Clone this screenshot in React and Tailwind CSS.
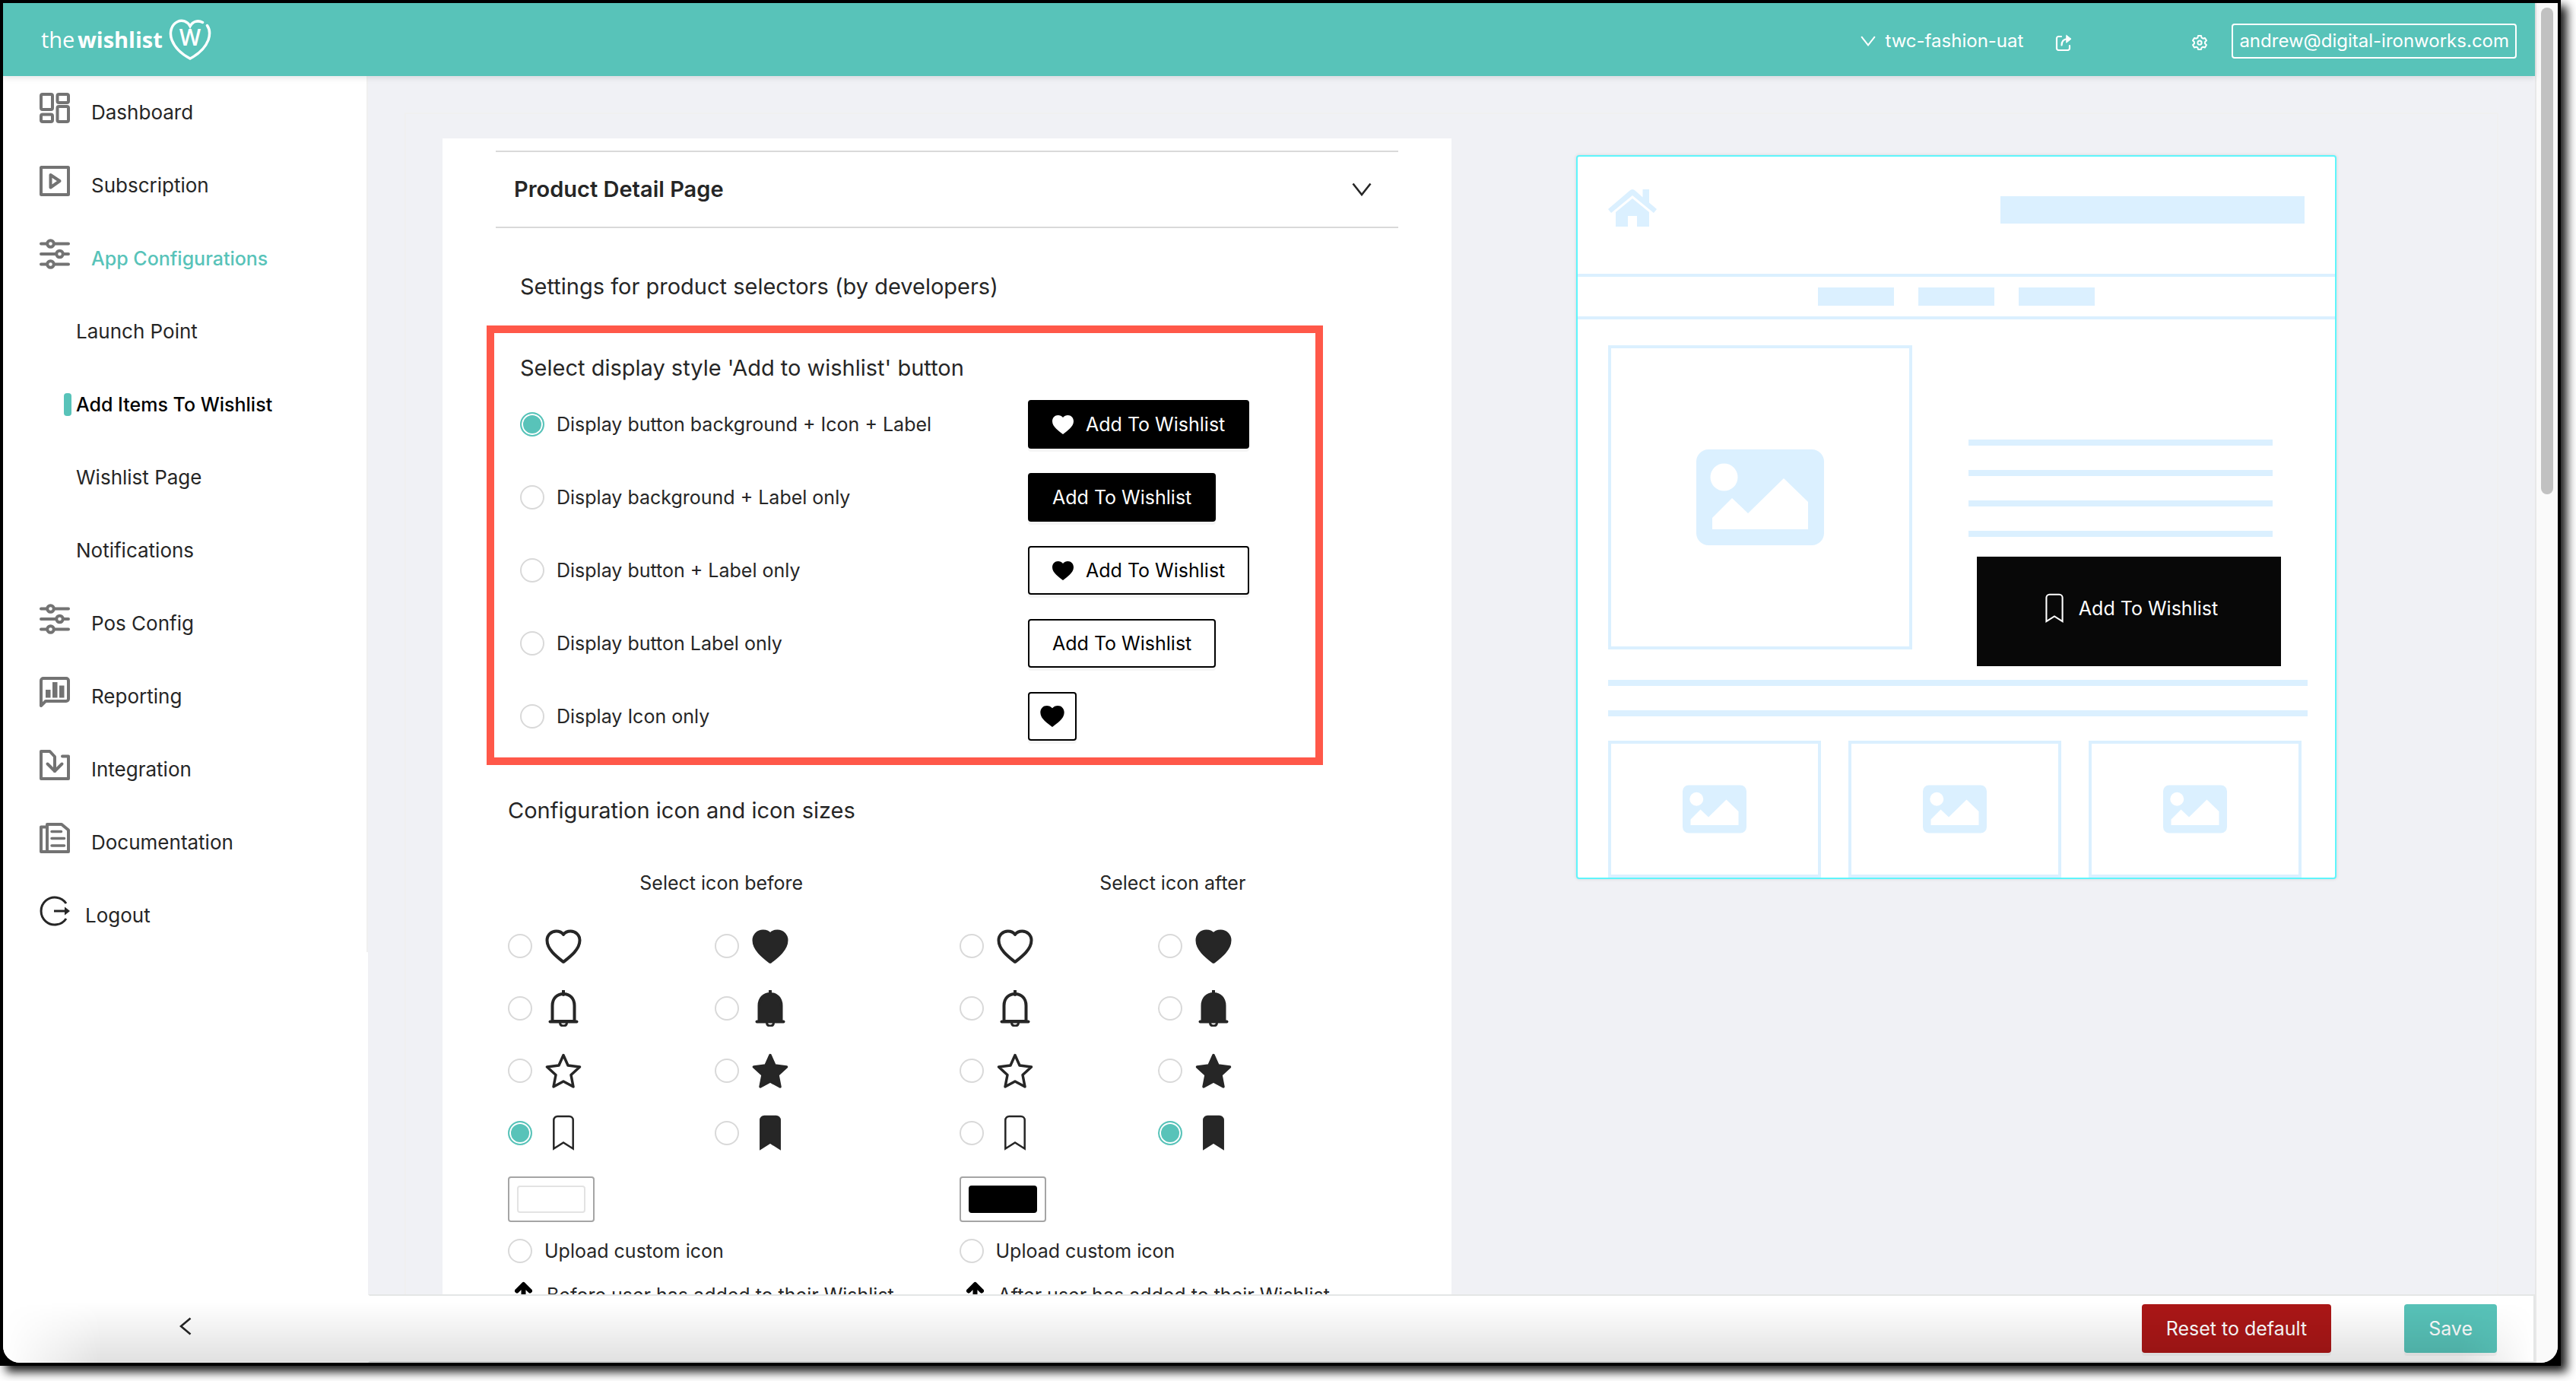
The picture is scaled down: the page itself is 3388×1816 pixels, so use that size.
import { useState } from "react";

/* ---------- icons ---------- */
function Svg({ className, viewBox = "0 0 40 40", children, ...rest }) {
  return (
    <svg className={className} viewBox={viewBox} fill="none" stroke="currentColor" strokeWidth="4" aria-hidden="true" {...rest}>
      {children}
    </svg>
  );
}

const DashboardIcon = () => (
  <Svg className="size-10">
    <rect x="2" y="2" width="15" height="20" rx="2" />
    <rect x="23.500" y="2" width="14.500" height="11" rx="2" />
    <rect x="2" y="28.500" width="15" height="9.500" rx="2" />
    <rect x="23.500" y="18" width="14.500" height="20" rx="2" />
  </Svg>
);
const SubscriptionIcon = () => (
  <Svg className="size-10">
    <rect x="2" y="2" width="36" height="36" rx="0.500" />
    <path d="M14.500 12v16.500L26.500 20z" strokeLinejoin="round" />
  </Svg>
);
const SlidersIcon = () => (
  <Svg className="size-10" strokeLinecap="round">
    <path d="M2 6.500h8M20 6.500h18M2 20h20M32 20h6M2 33.500h8M20 33.500h18" />
    <circle cx="14.500" cy="6.500" r="4.300" />
    <circle cx="26.500" cy="20" r="4.300" />
    <circle cx="14.500" cy="33.500" r="4.300" />
  </Svg>
);
const ReportingIcon = () => (
  <Svg className="size-10" strokeLinejoin="round">
    <path d="M2 38V5a3 3 0 0 1 3-3h30a3 3 0 0 1 3 3v24a3 3 0 0 1-3 3H8z" />
    <path d="M8 17h6.500v10.500H8zM17 7h6.500v20.500H17zM26 11.500h6.500v16H26z" fill="currentColor" stroke="none" />
  </Svg>
);
const IntegrationIcon = () => (
  <Svg className="size-10" strokeLinecap="round" strokeLinejoin="round">
    <path d="M30 8.500h8V38H2V2h11.500L20 9v19" />
    <path d="M10.500 18.500L20 28l9.500-9.500" />
  </Svg>
);
const DocumentationIcon = () => (
  <Svg className="size-10" strokeLinecap="round" strokeLinejoin="round">
    <path d="M10 2h19l9 7.500V38H10z" />
    <path d="M10 5.500H2V38h8" />
    <path d="M16 11.500h12.500M16 20.500h16.500M16 30h16.500" strokeWidth="3.500" />
  </Svg>
);
const LogoutIcon = () => (
  <Svg className="size-10 text-neutral-800" strokeWidth="3">
    <path d="M35 10A18 18 0 1 0 35 30" />
    <path d="M19 20h16" />
    <path d="M33 14.500L40 20l-7 5.500z" fill="currentColor" stroke="none" />
  </Svg>
);

const ChevronDown = ({ className }) => (
  <Svg className={className} viewBox="0 0 26 18" strokeWidth="2.600">
    <path d="M1.500 1.500L13 16 24.500 1.500" />
  </Svg>
);

const HEART_PATH = "M24 45C15 38 2.500 28.500 2.500 16.500 2.500 9 8.500 4.500 14.500 4.500c4 0 7.500 1.500 9.500 4.500 2-3 5.500-4.500 9.500-4.500 6 0 12 4.500 12 12C45.500 28.500 33 38 24 45z";

function Glyph({ kind, filled, className = "size-12" }) {
  const fill = filled ? "currentColor" : "none";
  if (kind === "heart")
    return (
      <Svg className={className} viewBox="0 0 48 48" strokeLinejoin="round" fill={fill}>
        <path d={HEART_PATH} />
      </Svg>
    );
  if (kind === "bell")
    return (
      <Svg className={className} viewBox="0 0 48 48">
        <path d="M9.500 41V20.500C9.500 11 15.500 5 24 5s14.500 6 14.500 15.500V41z" fill={fill} />
        <path d="M24 6V1" strokeLinecap="round" />
        <path d="M6.500 41.500h35" strokeLinecap="round" />
        <path d="M19.500 42.500c0 3.500 2 4.500 4.500 4.500s4.500-1 4.500-4.500" strokeWidth="3" />
      </Svg>
    );
  if (kind === "star")
    return (
      <Svg className={className} viewBox="0 0 48 48" strokeLinejoin="round" strokeWidth="3.500" fill={fill}>
        <path d="M24 3.500l6 13.500 15.500 2L34 29.500l3 15.500-13-7-13 7 3-15.500L2.500 19 18 17z" />
      </Svg>
    );
  return (
    <Svg className={className} viewBox="0 0 48 48" strokeWidth="2.500" fill={fill}>
      <path d="M11.300 44.500V7a5 5 0 0 1 5-5h15.400a5 5 0 0 1 5 5v37.500L24 36.500z" />
    </Svg>
  );
}

const SolidHeart = ({ className }) => (
  <svg className={className} viewBox="0 0 28 25" fill="currentColor" aria-hidden="true">
    <path d="M14 25C9 21 0 15.500 0 8 0 3 3.500 0 7.500 0 10 0 12.500 1 14 3c1.500-2 4-3 6.500-3C24.500 0 28 3 28 8c0 7.500-9 13-14 17z" />
  </svg>
);

const PictureIcon = ({ className }) => (
  <svg className={className} viewBox="0 0 168 126" fill="#dbf0ff" aria-hidden="true">
    <path
      fillRule="evenodd"
      d="M16 0h136a16 16 0 0 1 16 16v94a16 16 0 0 1-16 16H16a16 16 0 0 1-16-16V16A16 16 0 0 1 16 0zM36.500 18.500a18 18 0 1 0 0 36 18 18 0 1 0 0-36zM21 105h126V69L115 38 68 84 47 64 21 90z"
    />
  </svg>
);

const HomeIcon = () => (
  <svg className="h-[50px] w-16" viewBox="0 0 64 50" fill="#dbf0ff" aria-hidden="true">
    <path d="M0 26L28 2q4-4 8 0l9.500 8.500V0H54v17.500L64 26l-4 5L32 8 4 31z" />
    <path d="M10 30L32 12l22 18v19H38V35H26v14H10z" />
  </svg>
);

const Logo = () => (
  <a href="#home" aria-label="the wishlist" className="flex items-center text-white">
    <span className="font-['Open_Sans',sans-serif] text-[29px] leading-9">
      the <b className="-ml-1 font-bold">wishlist</b>
    </span>
    <svg className="ml-2 h-[54px] w-14" viewBox="0 0 56 54" fill="none" stroke="white" strokeWidth="3.500" strokeLinecap="round" aria-hidden="true">
      <path d="M44.500 4.500C38 1 31 3.500 28 9.500 24.500 3 17.500.500 11.500 3.500 3 7.500.500 18 4 27.500 8 38 17.500 46.500 28 52c10.500-5.500 20-14 24-24.500C54.500 20 54 13.500 50.500 8.500" />
      <text x="28" y="35" textAnchor="middle" fill="white" stroke="none" className="font-['Open_Sans',sans-serif] text-[30px] font-semibold">W</text>
    </svg>
  </a>
);

/* ---------- controls ---------- */
function Radio({ name, value, checked, onChange, label }) {
  return (
    <input
      type="radio"
      name={name}
      value={value}
      checked={checked}
      onChange={() => onChange(value)}
      aria-label={label}
      className="size-8 shrink-0 appearance-none rounded-full border-2 border-[#d9d9d9] bg-white checked:border-[#58c3b9] checked:bg-[#58c3b9] checked:shadow-[inset_0_0_0_2px_white]"
    />
  );
}

/* ---------- layout ---------- */
function Header() {
  return (
    <header className="z-10 flex h-24 shrink-0 items-center justify-between bg-[#58c3b9] pr-6 pl-[50px] text-white shadow-[0_2px_8px_rgba(0,21,41,0.12)]">
      <Logo />
      <div className="flex items-center pt-1 text-[24px] leading-8">
        <button type="button" className="flex items-center gap-3">
          <ChevronDown className="h-[14px] w-5" />
          twc-fashion-uat
        </button>
        <button type="button" aria-label="Open store" className="ml-[42px] pt-1">
          <Svg className="size-[22px]" viewBox="0 0 22 22" strokeWidth="2.200" strokeLinecap="round" strokeLinejoin="round">
            <path d="M8 3H4.500A2.500 2.500 0 0 0 2 5.500v13A2.500 2.500 0 0 0 4.500 21h12a2.500 2.500 0 0 0 2.500-2.500V15" />
            <path d="M8.500 14.500C8.500 9 11 6.500 16 6" />
            <path d="M15 1.500L21 6.200 15 11z" fill="currentColor" strokeWidth="1" />
          </Svg>
        </button>
        <button type="button" aria-label="Settings" className="ml-[158px] pt-1">
          <Svg className="size-5" viewBox="0 0 20 20" strokeWidth="2" strokeLinejoin="round">
            <path d="M8 1h4l.6 2.700 1.800 1 2.600-.8 2 3.400-2 1.900v2l2 1.900-2 3.400-2.600-.8-1.800 1L12 19H8l-.6-2.300-1.800-1-2.600.8-2-3.400 2-1.900v-2L1 7.300l2-3.400 2.600.8 1.800-1z" />
            <circle cx="10" cy="10.200" r="2.600" />
          </Svg>
        </button>
        <button type="button" className="ml-8 h-[46px] rounded border-2 border-white px-2">
          andrew@digital-ironworks.com
        </button>
      </div>
    </header>
  );
}

const NAV = [
  { label: "Dashboard", Icon: DashboardIcon },
  { label: "Subscription", Icon: SubscriptionIcon },
  { label: "App Configurations", Icon: SlidersIcon, open: true },
  { label: "Launch Point", sub: true },
  { label: "Add Items To Wishlist", sub: true, current: true },
  { label: "Wishlist Page", sub: true },
  { label: "Notifications", sub: true },
  { label: "Pos Config", Icon: SlidersIcon },
  { label: "Reporting", Icon: ReportingIcon },
  { label: "Integration", Icon: IntegrationIcon },
  { label: "Documentation", Icon: DocumentationIcon },
  { label: "Logout", Icon: LogoutIcon, tight: true },
];

function Sidebar() {
  return (
    <aside className="flex w-[480px] shrink-0 flex-col justify-between bg-white">
      <nav>
        <ul className="border-r-2 border-[#f0f0f0]">
          {NAV.map(({ label, Icon, sub, open, current, tight }) => (
            <li key={label} className="flex h-24 items-center">
              {sub ? (
                <a href={"#" + label} className={`flex items-center pl-20 leading-8 ${current ? "text-[25px] font-medium text-black" : "text-[26px] text-[#262626]"}`}>
                  <span className={`mr-1.5 h-[30px] w-2.5 rounded ${current ? "bg-[#58c3b9]" : ""}`} />
                  {label}
                </a>
              ) : (
                <a
                  href={"#" + label}
                  className={`flex items-center pl-12 leading-8 ${tight ? "gap-5" : "gap-7"} ${open ? "text-[25px] font-medium text-[#58c3b9]" : "text-[26px] text-[#262626]"}`}
                >
                  <span className="mb-3 text-[#737373]">
                    <Icon />
                  </span>
                  {label}
                </a>
              )}
            </li>
          ))}
        </ul>
      </nav>
      <button type="button" aria-label="Collapse menu" className="flex h-24 items-center justify-center text-[#262626]">
        <Svg className="h-6 w-4" viewBox="0 0 16 24" strokeWidth="2.600">
          <path d="M14.500 1.500L2 12l12.500 10.500" />
        </Svg>
      </button>
    </aside>
  );
}

const STYLES = [
  { id: "full", label: "Display button background + Icon + Label", solid: true, icon: true, text: true },
  { id: "bg-label", label: "Display background + Label only", solid: true, text: true },
  { id: "button-label", label: "Display button + Label only", icon: true, text: true },
  { id: "label", label: "Display button Label only", text: true },
  { id: "icon", label: "Display Icon only", icon: true },
];

function StylePicker() {
  const [style, setStyle] = useState("full");
  return (
    <div role="radiogroup" aria-labelledby="style-title" className="-mx-3 mt-[25px] mr-[99px] border-[10px] border-[#ff5849] pt-5 pb-1.5 pl-[34px]">
      <p id="style-title" className="text-[29px] leading-[52px]">
        Select display style &#39;Add to wishlist&#39; button
      </p>
      {STYLES.map((s) => (
        <div key={s.id} className="flex h-24 items-center">
          <label className="flex w-[668px] items-center gap-4 text-[25px] leading-8">
            <Radio name="display-style" value={s.id} checked={style === s.id} onChange={setStyle} label={s.label} />
            {s.label}
          </label>
          <button
            type="button"
            aria-label={s.text ? undefined : "Add to wishlist"}
            className={`flex h-16 items-center gap-4 rounded border-2 border-black text-[25px] leading-8 shadow-[0_4px_0_rgba(0,0,0,0.04)] ${
              s.solid ? "bg-black text-white" : "bg-white text-black"
            } ${s.text ? "px-[30px]" : "w-16 justify-center"}`}
          >
            {s.icon && <SolidHeart className={s.text ? "h-[25px] w-7" : "h-7 w-8"} />}
            {s.text && "Add To Wishlist"}
          </button>
        </div>
      ))}
    </div>
  );
}

const KINDS = ["heart", "bell", "star", "bookmark"];

function IconColumn({ title, name, initial, swatch, firstCol, hint }) {
  const [value, setValue] = useState(initial);
  return (
    <section className="pl-4">
      <h3 className="-ml-4 text-center text-[25px] leading-8">{title}</h3>
      <div className="mt-[26px]">
        {KINDS.map((kind) => (
          <div key={kind} className="flex h-[82px] items-center">
            {[false, true].map((filled) => {
              const id = kind + (filled ? "-filled" : "-outline");
              return (
                <label key={id} className={`flex items-center gap-[17px] text-[#262626] ${filled ? "" : firstCol}`}>
                  <Radio name={name} value={id} checked={value === id} onChange={setValue} label={id} />
                  <Glyph kind={kind} filled={filled} />
                </label>
              );
            })}
          </div>
        ))}
      </div>
      <button type="button" aria-label="Icon colour" className="mt-4 block rounded border-2 border-[#a5a5a5] p-2.5">
        <span className={`block h-9 w-[90px] rounded border-2 ${swatch}`} />
      </button>
      <label className="mt-[22px] flex items-center gap-4 text-[25px] leading-8">
        <Radio name={name} value="custom" checked={value === "custom"} onChange={setValue} label="Upload custom icon" />
        Upload custom icon
      </label>
      <p className="mt-6 flex items-center text-[25px] leading-9">
        <Svg className="mr-[19px] ml-[9px] h-9 w-[23px] text-black" viewBox="0 0 23 36" strokeWidth="6" strokeLinecap="round" strokeLinejoin="round">
          <path d="M3 12.500L11.500 4l8.500 8.500M11.500 5v26" />
        </Svg>
        {hint}
      </p>
    </section>
  );
}

function SettingsCard() {
  return (
    <div className="bg-white px-[70px] pt-4 text-[#262626]">
      <button type="button" className="flex h-[102px] w-full items-center justify-between border-y-2 border-[#d9d9d9] pr-[35px] pl-6">
        <h2 className="text-[29px] leading-10 font-semibold">Product Detail Page</h2>
        <ChevronDown className="h-[18px] w-[26px]" />
      </button>
      <h3 className="mt-[51px] ml-8 text-[29px] leading-[52px]">Settings for product selectors (by developers)</h3>
      <StylePicker />
      <h3 className="mt-[34px] ml-4 text-[29px] leading-[52px]">Configuration icon and icon sizes</h3>
      <div className="mt-[53px] grid grid-cols-2">
        <IconColumn title="Select icon before" name="icon-before" initial="bookmark-outline" swatch="border-[#e3e3e3] bg-white" firstCol="w-[272px]" hint="Before user has added to their Wishlist" />
        <IconColumn title="Select icon after" name="icon-after" initial="bookmark-filled" swatch="border-black bg-black" firstCol="w-[261px]" hint="After user has added to their Wishlist" />
      </div>
    </div>
  );
}

const Bar = ({ className }) => <div className={`bg-[#dbf0ff] ${className}`} />;

function Preview() {
  return (
    <div className="mx-auto mt-[22px] h-[952px] w-[1000px] overflow-hidden rounded border-2 border-[#5ff5fb] bg-white shadow-[0_0_4px_rgba(0,0,0,0.12)]">
      <div className="flex h-[154px] items-start justify-between px-10 pt-[43px]">
        <HomeIcon />
        <Bar className="mt-[9px] h-9 w-[400px]" />
      </div>
      <div className="flex h-[60px] items-center justify-center gap-8 border-y-4 border-[#dbf0ff]">
        <Bar className="h-6 w-[100px]" />
        <Bar className="h-6 w-[100px]" />
        <Bar className="h-6 w-[100px]" />
      </div>
      <div className="mt-[34px] ml-10 flex">
        <div className="flex size-[400px] items-center justify-center border-4 border-[#dbf0ff]">
          <PictureIcon className="h-[126px] w-[168px]" />
        </div>
        <div className="mt-[124px] -mb-6 ml-[74px]">
          <div className="flex flex-col gap-8">
            <Bar className="h-2 w-[400px]" />
            <Bar className="h-2 w-[400px]" />
            <Bar className="h-2 w-[400px]" />
            <Bar className="h-2 w-[400px]" />
          </div>
          <button type="button" className="mt-[26px] ml-[11px] flex h-36 w-[400px] items-center justify-center gap-3 bg-[#080808] pb-2 text-[25px] leading-8 text-white">
            <Glyph kind="bookmark" className="size-10" />
            Add To Wishlist
          </button>
        </div>
      </div>
      <Bar className="mt-10 ml-10 h-2 w-[920px]" />
      <Bar className="mt-8 ml-10 h-2 w-[920px]" />
      <div className="mt-8 ml-10 flex gap-9">
        {[0, 1, 2].map((i) => (
          <div key={i} className="flex h-[180px] w-[280px] items-center justify-center border-4 border-[#dbf0ff]">
            <PictureIcon className="h-16 w-[84px]" />
          </div>
        ))}
      </div>
    </div>
  );
}

function Footer() {
  return (
    <footer className="flex h-[90px] shrink-0 items-start justify-end gap-24 border-2 border-[#e4e6e6] border-l-transparent bg-white pt-[11px] pr-12 text-[25px] leading-8 text-white">
      <button type="button" className="h-16 rounded bg-[#ab1717] px-8 shadow-[0_4px_0_rgba(0,0,0,0.04)]">Reset to default</button>
      <button type="button" className="h-16 rounded bg-[#58c3b9] px-8 shadow-[0_4px_0_rgba(0,0,0,0.04)]">Save</button>
    </footer>
  );
}

export default function App() {
  return (
    <div className="h-screen w-full bg-white pr-5 pb-5 font-['Inter',sans-serif]">
      <div className="h-full bg-black p-1 shadow-[8px_8px_12px_rgba(0,0,0,0.9)]">
        <div className="relative flex h-full overflow-hidden rounded-b-[22px] bg-white">
          <div className="flex min-w-0 flex-1 flex-col">
            <Header />
            <div className="flex min-h-0 flex-1">
              <Sidebar />
              <div className="flex min-w-0 flex-1 flex-col">
                <main className="min-h-0 flex-1 overflow-hidden bg-[#f0f1f5] px-12 pt-12">
                  <div className="grid grid-cols-2 border-2 border-[#f0f0f0] px-12 pt-8">
                    <SettingsCard />
                    <Preview />
                  </div>
                </main>
                <Footer />
              </div>
            </div>
          </div>
          <div className="w-[30px] shrink-0 border-l-2 border-[#e8e8e8] bg-[#fafafa] px-1.5 pt-1.5" aria-hidden="true">
            <div className="h-[640px] rounded-full bg-[#c1c1c1]" />
          </div>
          <div className="pointer-events-none absolute inset-x-0 bottom-0 h-20 bg-linear-to-b from-transparent to-black/12 [mask-image:linear-gradient(to_right,transparent,black_130px,black_calc(100%-130px),transparent_calc(100%-30px))]" />
        </div>
      </div>
    </div>
  );
}
